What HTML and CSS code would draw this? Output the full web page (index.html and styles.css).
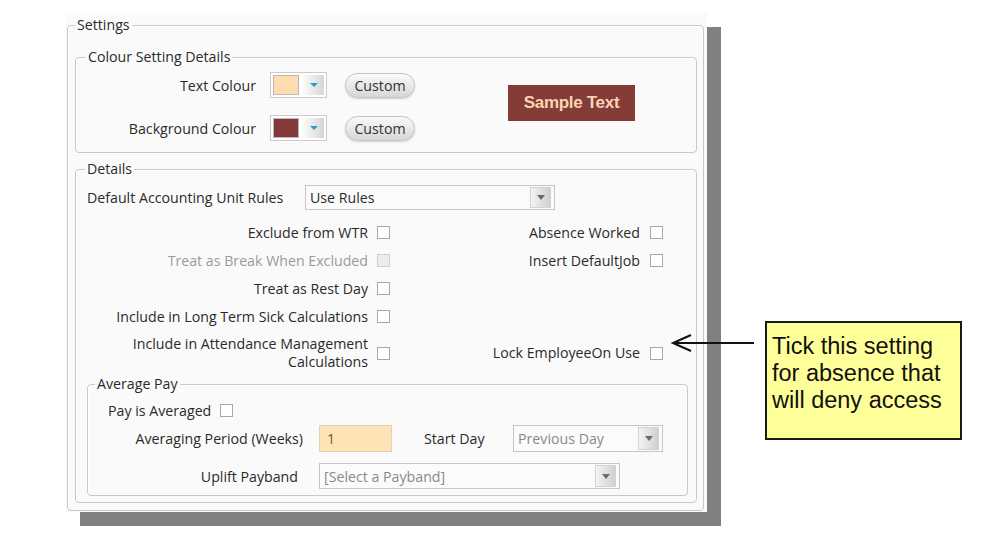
FILE: index.html
```
<!DOCTYPE html>
<html lang="en">
<head>
    <meta charset="UTF-8">
    <title>Absence Settings</title>
    <link rel="stylesheet" href="styles.css">
</head>
<body>
    <div class="stage">
        <div class="panel">
            <fieldset class="group settings">
                <legend>Settings</legend>
                <div class="group-body settings-body">

                    <fieldset class="group colour">
                        <legend>Colour Setting Details</legend>
                        <div class="group-body colour-body">
                            <div class="colour-rows">
                                <div class="colour-row">
                                    <span class="colour-label">Text Colour</span>
                                    <div class="picker">
                                        <span class="swatch swatch-text"></span>
                                        <span class="picker-drop"><i class="tri-blue"></i></span>
                                    </div>
                                    <button class="pill">Custom</button>
                                </div>
                                <div class="colour-row">
                                    <span class="colour-label">Background Colour</span>
                                    <div class="picker">
                                        <span class="swatch swatch-back"></span>
                                        <span class="picker-drop"><i class="tri-blue"></i></span>
                                    </div>
                                    <button class="pill">Custom</button>
                                </div>
                            </div>
                            <div class="sample">Sample Text</div>
                        </div>
                    </fieldset>

                    <fieldset class="group details">
                        <legend>Details</legend>
                        <div class="group-body details-body">
                            <div class="rules-row">
                                <span class="rules-label">Default Accounting Unit Rules</span>
                                <div class="combo combo-rules">
                                    <span class="combo-text">Use Rules</span>
                                    <span class="combo-btn"><i class="tri-grey"></i></span>
                                </div>
                            </div>

                            <div class="checks">
                                <div class="check-row">
                                    <div class="cell cell-left"><span>Exclude from WTR</span><i class="box"></i></div>
                                    <div class="cell cell-right"><span>Absence Worked</span><i class="box"></i></div>
                                </div>
                                <div class="check-row">
                                    <div class="cell cell-left disabled"><span>Treat as Break When Excluded</span><i class="box"></i></div>
                                    <div class="cell cell-right"><span>Insert DefaultJob</span><i class="box"></i></div>
                                </div>
                                <div class="check-row">
                                    <div class="cell cell-left"><span>Treat as Rest Day</span><i class="box"></i></div>
                                    <div class="cell cell-right"></div>
                                </div>
                                <div class="check-row">
                                    <div class="cell cell-left"><span>Include in Long Term Sick Calculations</span><i class="box"></i></div>
                                    <div class="cell cell-right"></div>
                                </div>
                                <div class="check-row tall">
                                    <div class="cell cell-left"><span>Include in Attendance Management<br>Calculations</span><i class="box"></i></div>
                                    <div class="cell cell-right"><span>Lock EmployeeOn Use</span><i class="box"></i></div>
                                </div>
                            </div>

                            <fieldset class="group average">
                                <legend>Average Pay</legend>
                                <div class="group-body average-body">
                                    <div class="avg-row first">
                                        <span>Pay is Averaged</span><i class="box"></i>
                                    </div>
                                    <div class="avg-row second">
                                        <span class="avg-label">Averaging Period (Weeks)</span>
                                        <div class="weeks">1</div>
                                        <span class="start-label">Start Day</span>
                                        <div class="combo combo-day">
                                            <span class="combo-text">Previous Day</span>
                                            <span class="combo-btn"><i class="tri-grey"></i></span>
                                        </div>
                                    </div>
                                    <div class="avg-row third">
                                        <span class="avg-label short">Uplift Payband</span>
                                        <div class="combo combo-band">
                                            <span class="combo-text">[Select a Payband]</span>
                                            <span class="combo-btn"><i class="tri-grey"></i></span>
                                        </div>
                                    </div>
                                </div>
                            </fieldset>
                        </div>
                    </fieldset>
                </div>
            </fieldset>
        </div>

        <div class="callout">Tick this setting<br>for absence that<br>will deny access</div>

        <svg class="pointer" width="86" height="22" viewBox="0 0 86 22">
            <path d="M3 10 H84" stroke="#111" stroke-width="2" fill="none"/>
            <path d="M21 2 L3 10 L21 18" stroke="#111" stroke-width="2" fill="none"/>
        </svg>
    </div>
</body>
</html>
```

FILE: styles.css
```
body {
    margin: 0;
    background: #fff;
    font-family: "Open Sans", "Noto Sans", sans-serif;
    font-size: 14.2px;
    color: #2a2a2a;
}

.stage {
    position: relative;
    display: flex;
    align-items: flex-start;
    padding: 13px 0 0 66px;
    height: 535px;
}

.panel {
    width: 641px;
    padding: 4px 0 1px 0;
    background: #fafafa;
    box-shadow: 14px 14px 0 #808080;
}

/* group boxes */
.group {
    margin: 0;
    padding: 0;
    min-inline-size: 0;
    border: 1px solid #c9c9c9;
    border-radius: 4px;
    box-shadow: inset 1px 1px 0 #fff;
}

.group legend {
    margin-left: 8px;
    padding: 0 2px;
    line-height: 16px;
    color: #2a2a2a;
}

.settings {
    margin: 0 3px 0 1px;
}

.settings legend {
    margin-left: 7px;
}

.settings-body {
    padding: 0 6px 7px 7px;
}

.colour {
    margin-top: 16px;
}

.colour legend {
    margin-left: 10px;
}

.colour-body {
    display: flex;
    align-items: flex-start;
    padding: 7px 0 11px 0;
}

.colour-rows {
    display: flex;
    flex-direction: column;
    gap: 17px;
}

.colour-row {
    display: flex;
    align-items: center;
    height: 26px;
}

.colour-label {
    width: 180px;
    margin-right: 14px;
    text-align: right;
}

.picker {
    display: flex;
    width: 57px;
    height: 26px;
    box-sizing: border-box;
    padding: 2px;
    border: 1px solid #cacaca;
    background: #fff;
}

.swatch {
    width: 26px;
    box-sizing: border-box;
    border: 1px solid #b9b9b9;
}

.swatch-text { background: #ffdcae; }
.swatch-back { background: #843a38; }

.picker-drop {
    display: flex;
    align-items: center;
    justify-content: center;
    width: 21px;
    margin-left: 4px;
    background: linear-gradient(90deg, #fbfbfb, #d6d6d6);
}

.tri-blue {
    width: 0;
    height: 0;
    border-left: 4px solid transparent;
    border-right: 4px solid transparent;
    border-top: 4px solid #2d98d6;
}

.pill {
    width: 70px;
    height: 25px;
    margin-left: 18px;
    padding: 0;
    border: 1px solid #c4c4c4;
    border-radius: 13px;
    background: linear-gradient(#fafafa, #e6e6e6 55%, #d7d7d7);
    box-shadow: 0 1px 2px rgba(0, 0, 0, 0.18);
    font: inherit;
    color: #333;
}

.sample {
    width: 127px;
    height: 36px;
    margin: 13px 0 0 93px;
    background: #843c39;
    color: #fbd5b2;
    font-family: "Liberation Sans", Arial, sans-serif;
    font-weight: bold;
    font-size: 17px;
    letter-spacing: -0.3px;
    line-height: 36px;
    text-align: center;
}

/* details */
.details {
    margin-top: 8px;
}

.details legend {
    margin-left: 9px;
}

.details-body {
    padding: 8px 8px 6px 11px;
}

.rules-row {
    display: flex;
    align-items: center;
    height: 25px;
}

.rules-label {
    width: 218px;
}

.combo {
    display: flex;
    align-items: center;
    box-sizing: border-box;
    border: 1px solid #c6c6c6;
    background: #fbfbfb;
    padding: 1px;
}

.combo-text {
    flex: 1;
    padding-left: 3px;
}

.combo-btn {
    display: flex;
    align-items: center;
    justify-content: center;
    width: 21px;
    height: 100%;
    margin-right: 2px;
    box-sizing: border-box;
    border: 1px solid #d2d2d2;
    background: linear-gradient(90deg, #f4f4f4, #cfcfcf);
}

.tri-grey {
    width: 0;
    height: 0;
    border-left: 4px solid transparent;
    border-right: 4px solid transparent;
    border-top: 5px solid #6a6a6a;
}

.combo-rules {
    width: 250px;
    height: 25px;
}

.checks {
    margin-top: 8px;
}

.check-row {
    display: flex;
    height: 28px;
    align-items: center;
}

.check-row.tall {
    height: 36px;
    padding-top: 5px;
    line-height: 18px;
}

.cell {
    display: flex;
    align-items: center;
    justify-content: flex-end;
}

.cell span {
    text-align: right;
}

.cell-left {
    width: 303px;
}

.cell-right {
    width: 274px;
}

.cell-left .box {
    margin: 0 0 0 9px;
}

.cell-right .box {
    margin: 0 1px 0 10px;
}

.box {
    display: block;
    flex: none;
    width: 13px;
    height: 13px;
    box-sizing: border-box;
    border: 1px solid #a8a8a8;
    background: #fff;
}

.disabled {
    color: #9a9a9a;
}

.disabled .box {
    border-color: #cfcfcf;
    background: #ededed;
}

/* average pay */
.average {
    margin-top: 5px;
}

.average legend {
    margin-left: 7px;
}

.average-body {
    padding: 6px 0 6px 20px;
}

.avg-row {
    display: flex;
    align-items: center;
}

.avg-row.first {
    height: 24px;
}

.avg-row.first .box {
    margin-left: 9px;
}

.avg-row.second {
    height: 27px;
    margin-top: 3px;
}

.avg-row.third {
    height: 26px;
    margin-top: 11px;
}

.avg-label {
    width: 195px;
    text-align: right;
    margin-right: 16px;
}

.avg-label.short {
    width: 190px;
    margin-right: 21px;
}

.weeks {
    width: 73px;
    height: 27px;
    box-sizing: border-box;
    border: 1px solid #e2d2b4;
    background: #fde3b6;
    padding-left: 7px;
    line-height: 25px;
    color: #6e5a38;
}

.start-label {
    margin-left: 32px;
    width: 62px;
}

.combo-day {
    width: 150px;
    height: 27px;
    margin-left: 27px;
    color: #8a8a8a;
}

.combo-band {
    width: 301px;
    height: 26px;
    color: #8a8a8a;
}

/* annotation */
.callout {
    margin: 308px 0 0 58px;
    width: 197px;
    height: 119px;
    box-sizing: border-box;
    border: 2px solid #1a1a1a;
    background: #ffff99;
    padding: 10px 0 0 5px;
    font-family: "Liberation Sans", Arial, sans-serif;
    font-size: 23.5px;
    line-height: 27px;
    color: #111;
    white-space: nowrap;
}

.pointer {
    position: absolute;
    left: 670px;
    top: 333px;
}
```
